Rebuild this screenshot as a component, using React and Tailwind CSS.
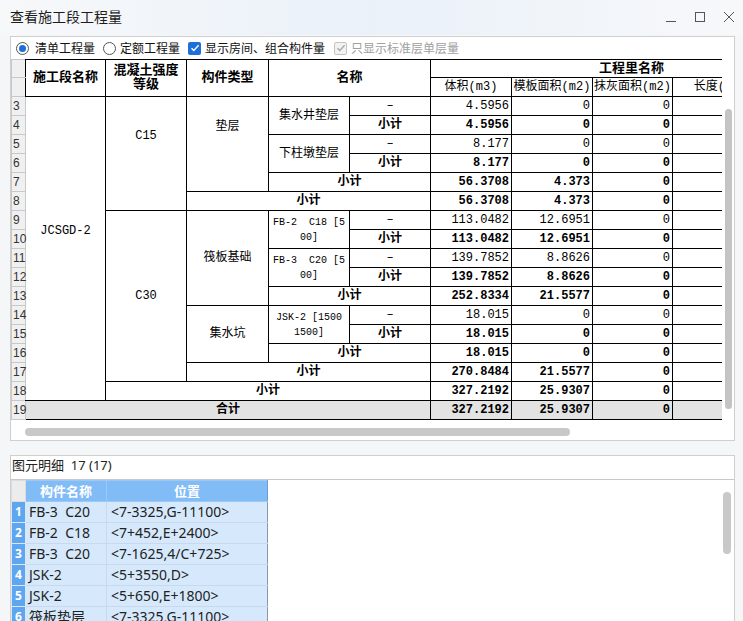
import React from "react";

const bd = "border border-black";
const cn = `${bd} text-center align-middle`;

function RN({ n }) {
  return (
    <td className="bg-[#f0f0f0] border border-[#c8c8c8] text-left pl-[1px] align-middle font-['Liberation_Sans',sans-serif] text-[12px] text-[#333] leading-none whitespace-nowrap overflow-visible">
      {n}
    </td>
  );
}

function Vals({ v, b }) {
  return (
    <>
      {v.map((x, i) => (
        <td key={i} className={`${bd} text-right pr-[2px] align-middle ${b ? "font-bold" : ""}`}>
          {x}
        </td>
      ))}
      <td className={bd}></td>
      <td className={bd}></td>
    </>
  );
}

function Sub({ span = 1 }) {
  return (
    <td colSpan={span} className={`${cn} font-bold`}>
      小计
    </td>
  );
}

function Dash() {
  return <td className={cn}>–</td>;
}

const details = [
  ["FB-3  C20", "<7-3325,G-11100>"],
  ["FB-2  C18", "<7+452,E+2400>"],
  ["FB-3  C20", "<7-1625,4/C+725>"],
  ["JSK-2", "<5+3550,D>"],
  ["JSK-2", "<5+650,E+1800>"],
  ["筏板垫层", "<7-3325,G-11100>"],
];

export default function App() {
  return (
    <div className="w-[743px] h-[621px] overflow-hidden bg-[#f5f6f8] font-['Noto_Sans','Noto_Sans_CJK_SC',sans-serif] text-black">
      {/* TITLE BAR */}
      <div className="h-[35px] flex items-center justify-between pl-[10px] pr-[8px] bg-gradient-to-r from-[#f7f8fa] via-[#eaf1f9] to-[#f7f8fa]">
        <span className="text-[14px] text-[#1c1c1c] font-['Noto_Sans_CJK_SC',sans-serif] pb-[2px]">查看施工段工程量</span>
        <div className="flex items-center gap-[17px] text-[#555] pb-[2px]">
          <svg width="12" height="12" viewBox="0 0 12 12"><path d="M1 10.5h10" stroke="currentColor" strokeWidth="1" /></svg>
          <svg width="12" height="12" viewBox="0 0 12 12"><rect x="1.5" y="1.5" width="9" height="9" fill="none" stroke="currentColor" strokeWidth="1" /></svg>
          <svg width="12" height="12" viewBox="0 0 12 12"><path d="M1 1l10 10M11 1L1 11" stroke="currentColor" strokeWidth="1" /></svg>
        </div>
      </div>

      {/* TOP PANEL */}
      <div className="ml-[10px] mt-[1px] w-[725px] h-[405px] border border-[#cfcfcf] bg-white flex flex-col">
        {/* OPTIONS */}
        <div className="h-[22px] flex items-center pl-[5px] text-[12px] font-['Noto_Sans_CJK_SC',sans-serif] text-[#111]">
          <span className="w-[13px] h-[13px] rounded-full border border-[#555] flex items-center justify-center">
            <span className="w-[7px] h-[7px] rounded-full bg-[#1a6fd8]"></span>
          </span>
          <span className="ml-[6px]">清单工程量</span>
          <span className="ml-[8px] w-[13px] h-[13px] rounded-full border border-[#555]"></span>
          <span className="ml-[4px]">定额工程量</span>
          <span className="ml-[8px] w-[13px] h-[13px] rounded-[2px] bg-[#1e6fd9] flex items-center justify-center">
            <svg width="10" height="10" viewBox="0 0 10 10"><path d="M1.5 5.2l2.3 2.3L8.6 2.3" fill="none" stroke="white" strokeWidth="1.4" /></svg>
          </span>
          <span className="ml-[4px]">显示房间、组合构件量</span>
          <span className="ml-[9px] w-[13px] h-[13px] rounded-[2px] border border-[#c4c4c4] bg-[#f2f2f2] flex items-center justify-center">
            <svg width="10" height="10" viewBox="0 0 10 10"><path d="M1.5 5.2l2.3 2.3L8.6 2.3" fill="none" stroke="#a8a8a8" strokeWidth="1.3" /></svg>
          </span>
          <span className="ml-[4px] text-[#a0a0a0]">只显示标准层单层量</span>
        </div>

        {/* GRID */}
        <div className="flex">
          <div className="w-[711px] h-[362px] overflow-hidden">
            <table className="table-fixed border-collapse w-[982px] font-['Liberation_Mono','Noto_Sans_CJK_SC',monospace] text-[11.5px] leading-[14px]">
              <colgroup>
                <col className="w-[14px]" />
                <col className="w-[80px]" />
                <col className="w-[81px]" />
                <col className="w-[82px]" />
                <col className="w-[81px]" />
                <col className="w-[81px]" />
                <col className="w-[81px]" />
                <col className="w-[81px]" />
                <col className="w-[80px]" />
                <col className="w-[88px]" />
                <col className="w-[233px]" />
              </colgroup>
              <thead>
                <tr className="h-[18px]">
                  <td className="bg-[#f0f0f0] border border-[#c8c8c8] border-r-black"></td>
                  <td rowSpan={2} className={`${cn} font-bold text-[13px]`}>施工段名称</td>
                  <td rowSpan={2} className={`${cn} font-bold text-[13px] leading-[14px]`}>混凝土强度<br />等级</td>
                  <td rowSpan={2} className={`${cn} font-bold text-[13px]`}>构件类型</td>
                  <td rowSpan={2} colSpan={2} className={`${cn} font-bold text-[13px]`}>名称</td>
                  <td colSpan={5} className={`${bd} text-left pl-[168px] font-bold text-[13px] leading-[16px]`}>工程里名称</td>
                </tr>
                <tr className="h-[19px]">
                  <td className="bg-[#f0f0f0] border border-[#c8c8c8] border-r-black"></td>
                  <td className={`${cn} text-[12px] leading-[16px]`}>体积(m3)</td>
                  <td className={`${cn} text-[12px] leading-[16px]`}>模板面积(m2)</td>
                  <td className={`${cn} text-[12px] leading-[16px]`}>抹灰面积(m2)</td>
                  <td className={`${cn} text-[12px] leading-[16px]`}>长度(m)</td>
                  <td className={bd}></td>
                </tr>
              </thead>
              <tbody className="text-[12px]">
                <tr className="h-[19px]">
                  <RN n={3} />
                  <td rowSpan={16} className={`${cn} border-l-[#c8c8c8] pb-[36px]`}>JCSGD-2</td>
                  <td rowSpan={6} className={`${cn} pb-[36px]`}>C15</td>
                  <td rowSpan={5} className={`${cn} pb-[34px]`}>垫层</td>
                  <td rowSpan={2} className={cn}>集水井垫层</td>
                  <Dash />
                  <Vals v={["4.5956", "0", "0"]} />
                </tr>
                <tr className="h-[19px]">
                  <RN n={4} />
                  <Sub />
                  <Vals v={["4.5956", "0", "0"]} b />
                </tr>
                <tr className="h-[19px]">
                  <RN n={5} />
                  <td rowSpan={2} className={cn}>下柱墩垫层</td>
                  <Dash />
                  <Vals v={["8.177", "0", "0"]} />
                </tr>
                <tr className="h-[19px]">
                  <RN n={6} />
                  <Sub />
                  <Vals v={["8.177", "0", "0"]} b />
                </tr>
                <tr className="h-[19px]">
                  <RN n={7} />
                  <Sub span={2} />
                  <Vals v={["56.3708", "4.373", "0"]} b />
                </tr>
                <tr className="h-[19px]">
                  <RN n={8} />
                  <Sub span={3} />
                  <Vals v={["56.3708", "4.373", "0"]} b />
                </tr>
                <tr className="h-[19px]">
                  <RN n={9} />
                  <td rowSpan={9} className={cn}>C30</td>
                  <td rowSpan={5} className={cn}>筏板基础</td>
                  <td rowSpan={2} className={`${cn} whitespace-pre text-[10px] leading-[15px]`}>{"FB-2  C18 [5\n00]"}</td>
                  <Dash />
                  <Vals v={["113.0482", "12.6951", "0"]} />
                </tr>
                <tr className="h-[19px]">
                  <RN n={10} />
                  <Sub />
                  <Vals v={["113.0482", "12.6951", "0"]} b />
                </tr>
                <tr className="h-[19px]">
                  <RN n={11} />
                  <td rowSpan={2} className={`${cn} whitespace-pre text-[10px] leading-[15px]`}>{"FB-3  C20 [5\n00]"}</td>
                  <Dash />
                  <Vals v={["139.7852", "8.8626", "0"]} />
                </tr>
                <tr className="h-[19px]">
                  <RN n={12} />
                  <Sub />
                  <Vals v={["139.7852", "8.8626", "0"]} b />
                </tr>
                <tr className="h-[19px]">
                  <RN n={13} />
                  <Sub span={2} />
                  <Vals v={["252.8334", "21.5577", "0"]} b />
                </tr>
                <tr className="h-[19px]">
                  <RN n={14} />
                  <td rowSpan={3} className={cn}>集水坑</td>
                  <td rowSpan={2} className={`${cn} whitespace-pre text-[10px] leading-[15px]`}>{"JSK-2 [1500\n1500]"}</td>
                  <Dash />
                  <Vals v={["18.015", "0", "0"]} />
                </tr>
                <tr className="h-[19px]">
                  <RN n={15} />
                  <Sub />
                  <Vals v={["18.015", "0", "0"]} b />
                </tr>
                <tr className="h-[19px]">
                  <RN n={16} />
                  <Sub span={2} />
                  <Vals v={["18.015", "0", "0"]} b />
                </tr>
                <tr className="h-[19px]">
                  <RN n={17} />
                  <Sub span={3} />
                  <Vals v={["270.8484", "21.5577", "0"]} b />
                </tr>
                <tr className="h-[19px]">
                  <RN n={18} />
                  <Sub span={4} />
                  <Vals v={["327.2192", "25.9307", "0"]} b />
                </tr>
                <tr className="h-[19px] bg-[#e3e3e3]">
                  <RN n={19} />
                  <td colSpan={5} className={`${cn} border-l-[#c8c8c8] font-bold`}>合计</td>
                  <Vals v={["327.2192", "25.9307", "0"]} b />
                </tr>
              </tbody>
            </table>
          </div>
          {/* V SCROLL */}
          <div className="flex-1 flex justify-center pt-[50px]">
            <div className="w-[7px] h-[300px] rounded-full bg-[#c4c4c4]"></div>
          </div>
        </div>

        {/* H SCROLL */}
        <div className="pl-[14px] pt-[7px]">
          <div className="w-[545px] h-[8px] rounded-full bg-[#c8c8c8]"></div>
        </div>
      </div>

      {/* BOTTOM PANEL */}
      <div className="ml-[10px] mt-[14px] w-[725px] h-[170px] border border-[#cfcfcf] bg-white flex flex-col">
        <div className="h-[27px] flex items-center pb-[3px] pl-[1px] text-[13px] text-[#222] border-b border-[#c8c8c8] font-['Noto_Sans','Noto_Sans_CJK_SC',sans-serif]">
          图元明细&nbsp;&nbsp;17 (17)
        </div>
        <div className="flex">
          <table className="table-fixed border-collapse w-[256px] text-[14px] text-[#222]">
            <colgroup>
              <col className="w-[14px]" />
              <col className="w-[81px]" />
              <col className="w-[161px]" />
            </colgroup>
            <thead>
              <tr className="h-[21px]">
                <td className="bg-[#ececec] border border-[#dcdcdc]"></td>
                <td className="bg-[#82bcf6] border border-[#9cc9f5] text-center text-white font-bold text-[13px] leading-none font-['Noto_Sans_CJK_SC',sans-serif]">构件名称</td>
                <td className="bg-[#82bcf6] border border-[#9cc9f5] border-r-[#6d9dd0] text-center text-white font-bold text-[13px] leading-none font-['Noto_Sans_CJK_SC',sans-serif]">位置</td>
              </tr>
            </thead>
            <tbody>
              {details.map(([name, pos], i) => (
                <tr key={i} className="h-[21px]">
                  <td className="bg-[#5ea7f0] border border-[#dbe7f3] text-white font-bold text-[12px] text-center leading-none">{i + 1}</td>
                  <td className="bg-[#d6e9fc] border border-[#c9d9ea] pl-[3px] whitespace-pre leading-none">{name}</td>
                  <td className="bg-[#d6e9fc] border border-[#c9d9ea] border-r-[#8c9aa8] pl-[4px] whitespace-pre leading-none">{pos}</td>
                </tr>
              ))}
            </tbody>
          </table>
          <div className="flex-1 flex justify-end pr-[3px] pt-[12px]">
            <div className="w-[8px] h-[62px] rounded-full bg-[#c8c8c8]"></div>
          </div>
        </div>
      </div>
    </div>
  );
}
